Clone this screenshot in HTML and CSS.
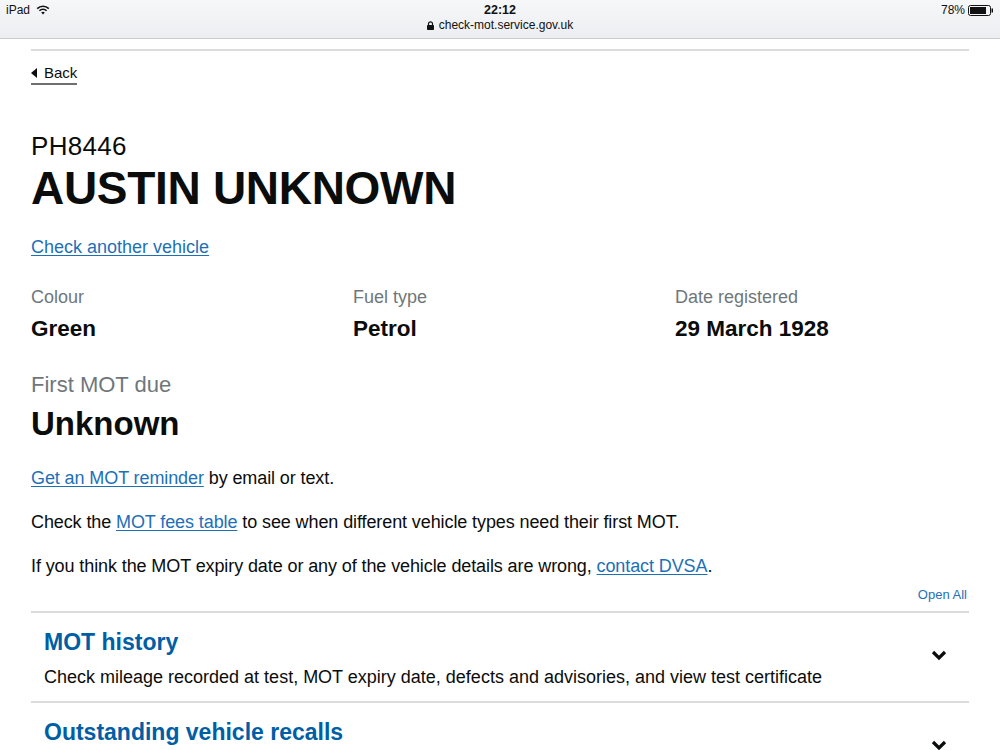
FILE: index.html
```html
<!DOCTYPE html>
<html lang="en">
<head>
<meta charset="utf-8">
<title>Check MOT history</title>
<link rel="stylesheet" href="styles.css">
</head>
<body>
<div class="statusbar">
  <div class="sb-row">
    <div class="sb-left">iPad
      <svg class="wifi" width="14" height="10" viewBox="0 0 14 10"><path d="M7 9.6 L5.2 7.6 A2.6 2.6 0 0 1 8.8 7.6 Z" fill="#111"/><path d="M3.4 5.8 A5 5 0 0 1 10.6 5.8" stroke="#111" stroke-width="1.6" fill="none"/><path d="M1.2 3.6 A8.2 8.2 0 0 1 12.8 3.6" stroke="#111" stroke-width="1.6" fill="none"/></svg>
    </div>
    <div class="sb-time">22:12</div>
    <div class="sb-right">78%
      <svg class="battery" width="26" height="11" viewBox="0 0 26 11"><rect x="0.5" y="0.5" width="22" height="10" rx="2" fill="none" stroke="#111"/><rect x="2" y="2" width="16" height="7" fill="#111"/><rect x="23.5" y="3.5" width="1.5" height="4" fill="#111"/></svg>
    </div>
  </div>
  <div class="sb-url"><svg class="lock" width="7" height="9" viewBox="0 0 7 9"><path d="M1.5 4V2.8a2 2 0 0 1 4 0V4" stroke="#111" stroke-width="1.2" fill="none"/><rect x="0" y="4" width="7" height="5" rx="0.8" fill="#111"/></svg>check-mot.service.gov.uk</div>
</div>

<main class="page">
  <div class="topline"></div>
  <a class="back" href="#"><span class="tri"></span>Back</a>

  <div class="reg">PH8446</div>
  <h1 class="make">AUSTIN UNKNOWN</h1>
  <a class="link check" href="#">Check another vehicle</a>

  <dl class="details">
    <div class="item"><dt>Colour</dt><dd>Green</dd></div>
    <div class="item"><dt>Fuel type</dt><dd>Petrol</dd></div>
    <div class="item"><dt>Date registered</dt><dd>29 March 1928</dd></div>
  </dl>

  <div class="due">
    <div class="due-label">First MOT due</div>
    <div class="due-value">Unknown</div>
  </div>

  <p class="body"><a class="link" href="#">Get an MOT reminder</a> by email or text.</p>
  <p class="body">Check the <a class="link" href="#">MOT fees table</a> to see when different vehicle types need their first MOT.</p>
  <p class="body">If you think the MOT expiry date or any of the vehicle details are wrong, <a class="link" href="#">contact DVSA</a>.</p>

  <div class="openall"><a href="#">Open All</a></div>

  <section class="acc">
    <div class="acc-head">
      <div class="acc-text">
        <h2>MOT history</h2>
        <p>Check mileage recorded at test, MOT expiry date, defects and advisories, and view test certificate</p>
      </div>
      <svg class="chev" width="16" height="11" viewBox="0 0 16 11"><path d="M2 2 L8 8 L14 2" stroke="#0b0c0c" stroke-width="3.2" fill="none"/></svg>
    </div>
  </section>
  <section class="acc">
    <div class="acc-head">
      <div class="acc-text">
        <h2>Outstanding vehicle recalls</h2>
      </div>
      <svg class="chev" width="16" height="11" viewBox="0 0 16 11"><path d="M2 2 L8 8 L14 2" stroke="#0b0c0c" stroke-width="3.2" fill="none"/></svg>
    </div>
  </section>
</main>
</body>
</html>
```
FILE: styles.css
```css
html, body { margin: 0; padding: 0; background: #fff; }
body { font-family: "Liberation Sans", Arial, sans-serif; color: #0b0c0c; overflow: hidden; height: 750px; }

.statusbar {
  height: 38px;
  background: linear-gradient(#f6f7f9, #eceef1);
  border-bottom: 1px solid #c9cbce;
  font-family: "Liberation Sans", Arial, sans-serif;
  color: #111;
}
.sb-row { display: flex; justify-content: space-between; align-items: center; height: 20px; padding: 0 6px; font-size: 12px; }
.sb-left { display: flex; align-items: center; gap: 6px; width: 100px; }
.sb-right { display: flex; align-items: center; justify-content: flex-end; gap: 3px; width: 100px; }
.sb-time { font-weight: bold; font-size: 12.5px; }
.sb-url { text-align: center; font-size: 12px; display: flex; justify-content: center; align-items: center; gap: 5px; margin-top: -2px; }

.page { padding: 10px 31px 0 31px; }
.topline { height: 2px; background: #dcdcdc; }

.back { display: inline-flex; align-items: center; gap: 7px; margin-top: 13px; color: #0b0c0c; text-decoration: none; font-size: 15px; border-bottom: 2px solid #6f6f6f; padding-bottom: 1px; line-height: 18px; }
.tri { width: 0; height: 0; border-top: 5px solid transparent; border-bottom: 5px solid transparent; border-right: 6px solid #0b0c0c; }

.reg { font-size: 26px; margin-top: 46px; line-height: 30px; letter-spacing: 0.3px; }
.make { font-size: 46px; font-weight: bold; margin: 1px 0 0 0; line-height: 52px; letter-spacing: -0.3px; }

.link { color: #1d70b8; text-decoration: underline; text-underline-offset: 2px; }
.check { display: inline-block; font-size: 18px; margin-top: 23px; }

.details { display: grid; grid-template-columns: 322px 322px 1fr; margin: 28px 0 0 0; }
.item dt { color: #6f777b; font-size: 18px; line-height: 22px; }
.item dd { margin: 9px 0 0 0; font-weight: bold; font-size: 22.5px; line-height: 24px; }

.due { margin-top: 31px; }
.due-label { color: #6f777b; font-size: 22px; line-height: 26px; }
.due-value { font-weight: bold; font-size: 33px; line-height: 38px; margin-top: 7px; }

.body { font-size: 18px; letter-spacing: -0.1px; margin: 0; line-height: 22px; }
.due + .body { margin-top: 24px; }
.body + .body { margin-top: 22px; }

.openall { text-align: right; font-size: 13px; margin-top: 10px; padding-right: 2px; line-height: 16px; }
.openall a { color: #1d70b8; text-decoration: none; }

.acc { border-top: 2px solid #dcdcdc; margin-top: 8px; }
.acc + .acc { margin-top: 0; }
.acc-head { display: flex; align-items: flex-start; justify-content: space-between; padding: 14px 22px 12px 13px; }
.acc-text h2 { margin: 0; color: #005ea5; font-size: 23px; line-height: 30px; }
.acc-text p { margin: 8px 0 0 0; font-size: 18px; line-height: 24px; }
.chev { flex: none; margin-top: 23px; }
```
